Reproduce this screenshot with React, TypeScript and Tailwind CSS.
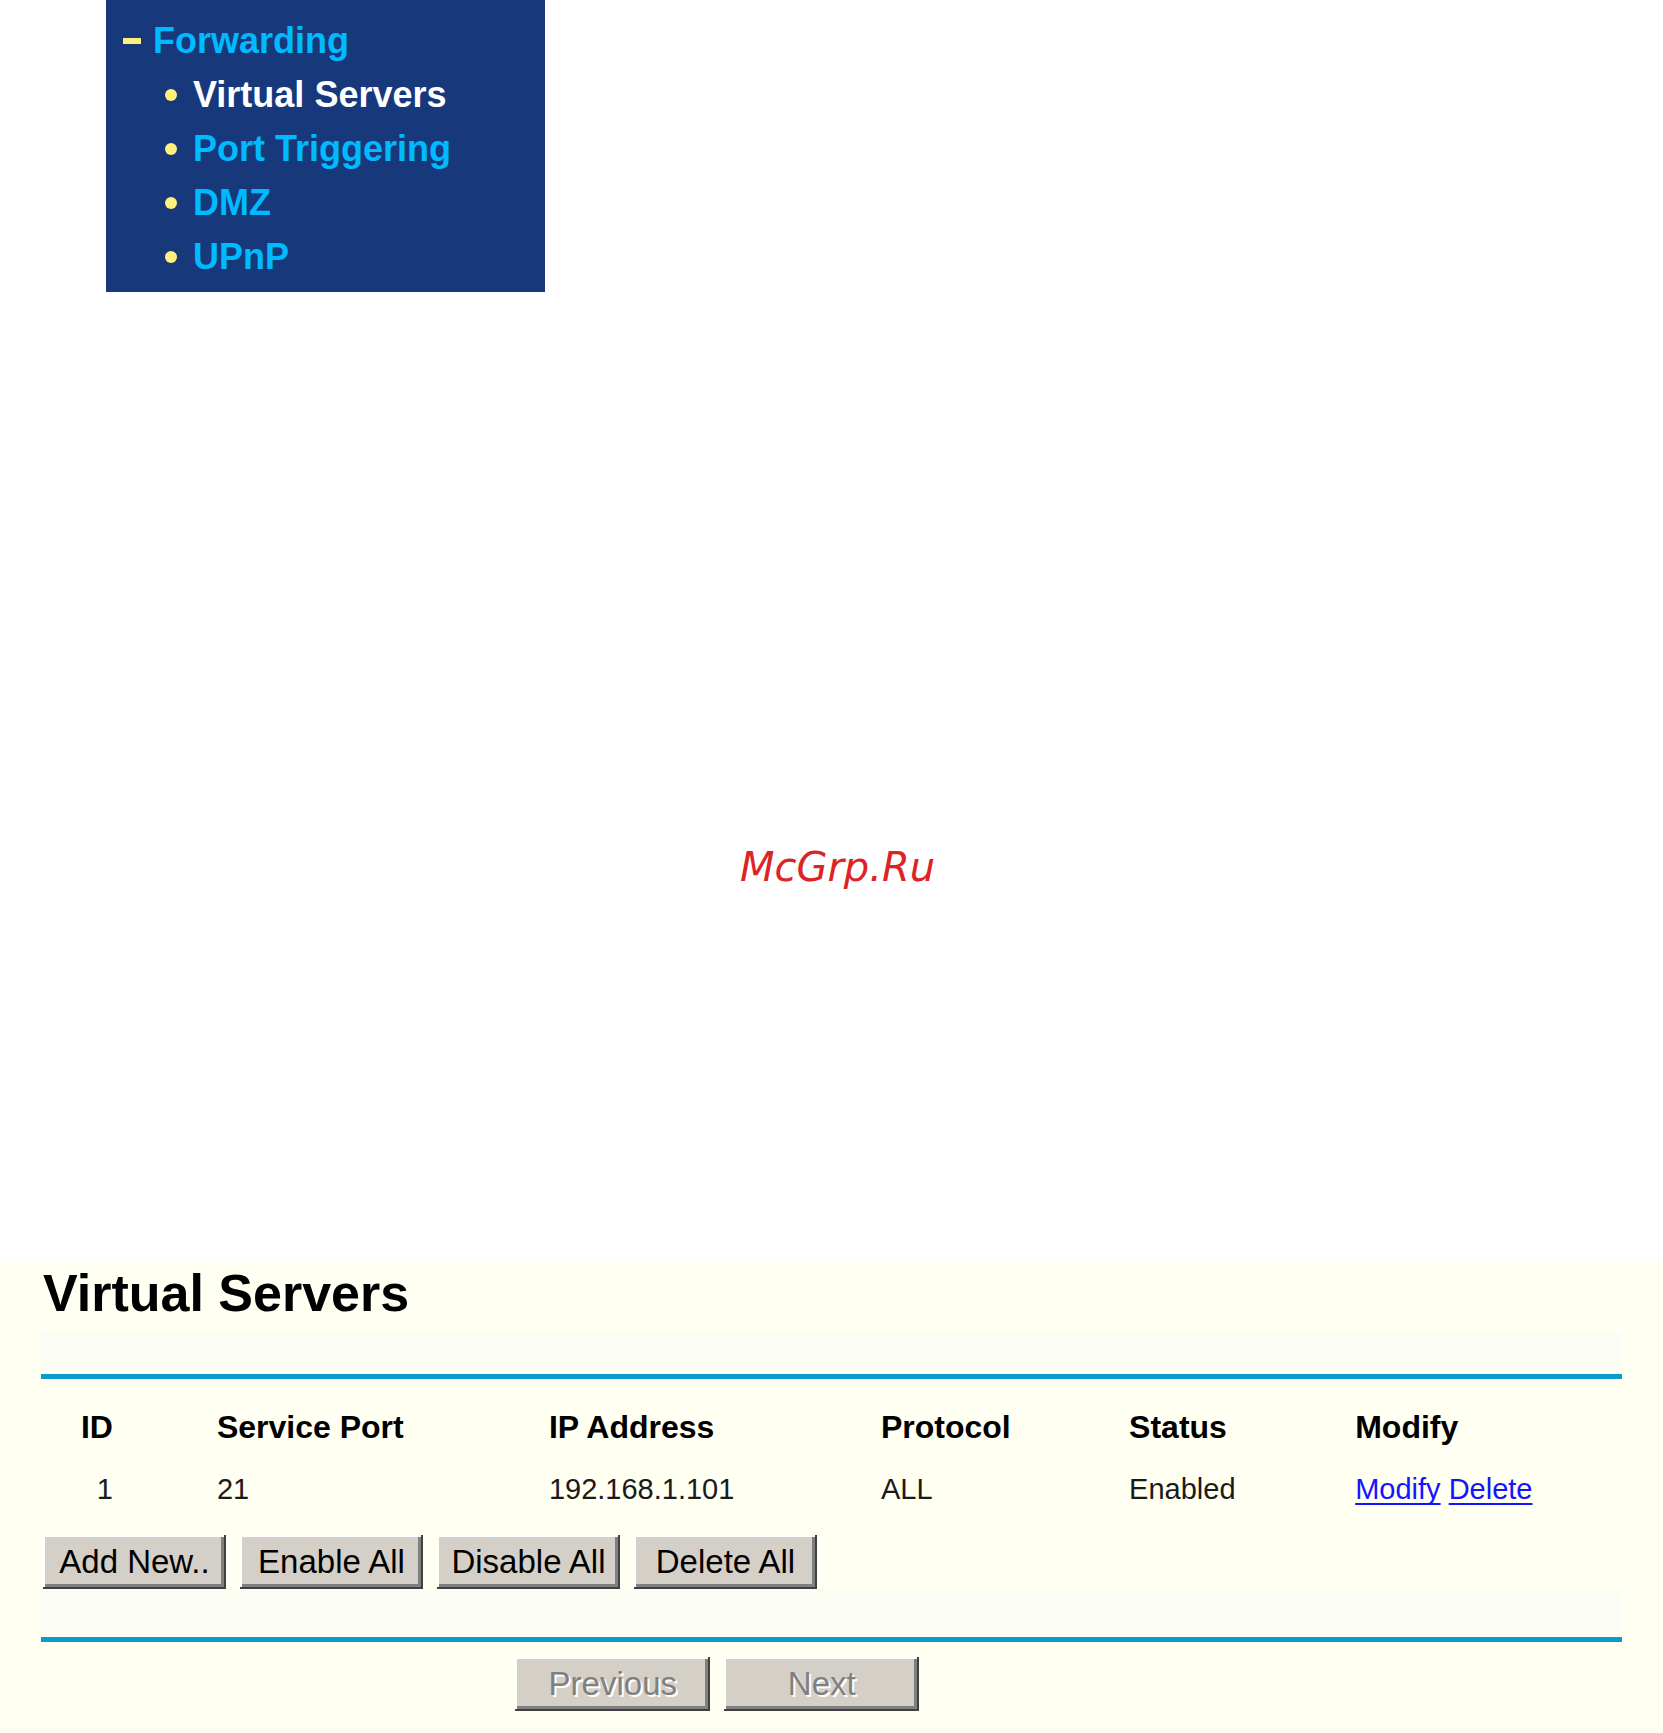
import type { ButtonHTMLAttributes } from "react";

const menuItems = ["Virtual Servers", "Port Triggering", "DMZ", "UPnP"];

const columns = [
  { label: "ID", width: "w-[11%]" },
  { label: "Service Port", width: "w-[21%]" },
  { label: "IP Address", width: "w-[21%]" },
  { label: "Protocol", width: "w-[15.7%]" },
  { label: "Status", width: "w-[14.3%]" },
  { label: "Modify", width: "w-[17%]" },
];

const servers = [
  { id: 1, port: "21", ip: "192.168.1.101", protocol: "ALL", status: "Enabled" },
];

function ClassicButton({ className, ...props }: ButtonHTMLAttributes<HTMLButtonElement>) {
  return (
    <button
      type="button"
      className={`h-[54px] shrink-0 whitespace-nowrap bg-[#d4d0c8] text-[33px] leading-[54px] text-black shadow-[inset_-2px_-2px_#404040,inset_2px_2px_#ffffff,inset_-5px_-5px_#808080] disabled:text-[#808080] disabled:[text-shadow:2px_2px_#ffffff] ${className}`}
      {...props}
    />
  );
}

function SideMenu() {
  return (
    <nav
      aria-label="Forwarding"
      className="ml-[106px] h-[292px] w-[439px] bg-[#17397c] pt-[14px] text-[36px] font-bold leading-[54px] text-[#00baff]"
    >
      <div className="flex items-center pl-[17px]">
        <span className="mr-3 h-[6px] w-[18px] bg-[#fff07d]" />
        <a href="#forwarding">Forwarding</a>
      </div>
      <ul>
        {menuItems.map((item, i) => (
          <li key={item} className="flex items-center pl-[59px]">
            <span className="mr-4 size-3 rounded-full bg-[#fff07d]" />
            <a href="#item" className={i === 0 ? "text-white" : ""}>
              {item}
            </a>
          </li>
        ))}
      </ul>
    </nav>
  );
}

export default function App() {
  return (
    <main className="bg-white font-['Liberation_Sans',Arial,sans-serif]">
      <SideMenu />

      <p className="pt-[555px] pb-[374px] pl-3 text-center font-['DejaVu_Sans',Verdana,sans-serif] text-[40px] italic leading-10 text-[#dc2426]">
        McGrp.Ru
      </p>

      <section className="bg-[#fffff2] px-[41px] pb-[22px] text-black">
        <h1 className="mb-[6px] pl-[2px] text-[52px] font-bold leading-[64px]">Virtual Servers</h1>
        <div className="h-12 border-b-[5px] border-[#0a9bce] bg-[#fcfef5]" />

        <table className="mt-[14px] mb-[18px] w-full table-fixed text-left">
          <thead>
            <tr className="h-[68px] text-[32px] font-bold leading-9">
              {columns.map((column) => (
                <th
                  key={column.label}
                  scope="col"
                  className={`${column.width} p-0 pl-[2px] first:pr-[102px] first:text-right`}
                >
                  {column.label}
                </th>
              ))}
            </tr>
          </thead>
          <tbody>
            {servers.map((server) => (
              <tr key={server.id} className="h-14 text-[29px] leading-9 text-[#1a1a1a]">
                <td className="p-0 pr-[102px] text-right">{server.id}</td>
                <td className="p-0 pl-[2px]">{server.port}</td>
                <td className="p-0 pl-[2px]">{server.ip}</td>
                <td className="p-0 pl-[2px]">{server.protocol}</td>
                <td className="p-0 pl-[2px]">{server.status}</td>
                <td className="p-0 pl-[2px] whitespace-nowrap text-[#1414ff]">
                  <a href="#modify" className="underline decoration-2 underline-offset-4 [text-decoration-skip-ink:none]">
                    Modify
                  </a>{" "}
                  <a href="#delete" className="underline decoration-2 underline-offset-4 [text-decoration-skip-ink:none]">
                    Delete
                  </a>
                </td>
              </tr>
            ))}
          </tbody>
        </table>

        <div className="flex gap-[14px] pl-[2px]">
          <ClassicButton className="w-[183px]">Add New..</ClassicButton>
          <ClassicButton className="w-[183px]">Enable All</ClassicButton>
          <ClassicButton className="w-[183px]">Disable All</ClassicButton>
          <ClassicButton className="w-[183px]">Delete All</ClassicButton>
        </div>
        <div className="h-[53px] border-b-[5px] border-[#0a9bce] bg-[#fcfef5]" />

        <div className="mt-[15px] flex gap-[14px] pl-[30%]">
          <ClassicButton className="w-[195px]" disabled>Previous</ClassicButton>
          <ClassicButton className="w-[195px]" disabled>Next</ClassicButton>
        </div>
      </section>
    </main>
  );
}
